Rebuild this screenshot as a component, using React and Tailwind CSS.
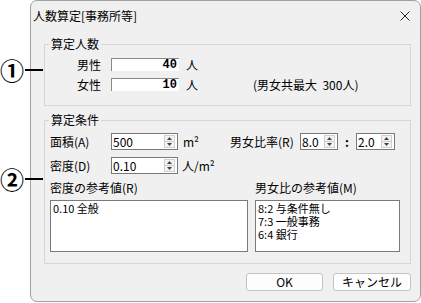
import React from 'react'

const FONT = { fontFamily: '"Noto Sans CJK JP", "Noto Sans", sans-serif' }

function Spin({ value, w }) {
  return (
    <div className={`${w} h-[17px] border border-[#7a7a7a] bg-white flex items-center`}>
      <span className="flex-1 pl-[1px] text-[12px] leading-[15px]">{value}</span>
      <div className="w-[11px] h-[13px] mr-[2px] flex flex-col border border-[#d0d0d0] bg-[#f3f3f3]">
        <div className="flex-1 flex items-center justify-center border-b border-[#d0d0d0]">
          <svg width="5" height="3" viewBox="0 0 5 3"><path d="M0 3 L2.5 0 L5 3 Z" fill="#404040" /></svg>
        </div>
        <div className="flex-1 flex items-center justify-center">
          <svg width="5" height="3" viewBox="0 0 5 3"><path d="M0 0 L2.5 3 L5 0 Z" fill="#404040" /></svg>
        </div>
      </div>
    </div>
  )
}

function CountRow({ label, value, note }) {
  return (
    <div className="flex items-center h-[13px]">
      <span className="ml-[32px] w-[34px] text-[12px] leading-[16px]">{label}</span>
      <div className="w-[68px] h-[13px] bg-white border-t border-l border-[#8a8a8a] flex items-center justify-end pr-[2px]">
        <span className="text-[12px] leading-[12px] font-bold" style={{ fontFamily: '"Liberation Mono", monospace' }}>{value}</span>
      </div>
      <span className="ml-[7px] text-[12px] leading-[16px]">人</span>
      {note && <span className="ml-[55px] text-[12px] leading-[16px] whitespace-pre">{note}</span>}
    </div>
  )
}

export default function App() {
  return (
    <div className="relative w-[421px] h-[303px] bg-white text-black pl-[30px]" style={FONT}>
      {/* markers */}
      <div className="absolute left-0 top-[58px] z-10 flex items-center">
        <span className="w-[24px] text-[24px] leading-[24px] text-center font-bold">①</span>
        <div className="ml-[1px] w-[18px] h-[2px] bg-black" />
      </div>
      <div className="absolute left-0 top-[167px] z-10 flex items-center">
        <span className="w-[24px] text-[24px] leading-[24px] text-center font-bold">②</span>
        <div className="ml-[1px] w-[18px] h-[2px] bg-black" />
      </div>

      <div className="w-[391px] h-[302px] border border-[#a0a0a0] rounded-[7px] bg-[#f0f0f0] flex flex-col">
        {/* title bar */}
        <div className="h-[29px] flex items-center justify-between pl-[2px] pr-[10px]">
          <span className="text-[12px] leading-[16px]">人数算定[事務所等]</span>
          <svg width="10" height="10" viewBox="0 0 10 10">
            <path d="M0.5 0.5 L9.5 9.5 M9.5 0.5 L0.5 9.5" stroke="#222" strokeWidth="1" />
          </svg>
        </div>

        <div className="flex flex-col pl-[13px] pr-[9px] pt-[14px]">
          {/* group 1 */}
          <div className="relative h-[62px] border border-[#d6d6d6] pt-[13px] flex flex-col gap-[7px]">
            <span className="absolute left-[4px] -top-[9px] px-[2px] bg-[#f0f0f0] text-[12px] leading-[16px]">算定人数</span>
            <CountRow label="男性" value="40" />
            <CountRow label="女性" value="10" note="(男女共最大  300人)" />
          </div>

          {/* group 2 */}
          <div className="relative mt-[14px] h-[144px] border border-[#d6d6d6] pt-[12px] pl-[5px] flex flex-col">
            <span className="absolute left-[4px] -top-[9px] px-[2px] bg-[#f0f0f0] text-[12px] leading-[16px]">算定条件</span>
            <div className="flex items-center h-[17px] text-[12px] leading-[16px]">
              <span className="w-[61px]">面積(A)</span>
              <Spin value="500" w="w-[67px]" />
              <span className="w-[52px] pl-[5px]">m²</span>
              <span className="w-[70px]">男女比率(R)</span>
              <Spin value="8.0" w="w-[38px]" />
              <span className="w-[18px] text-center font-bold">:</span>
              <Spin value="2.0" w="w-[39px]" />
            </div>
            <div className="flex items-center h-[17px] mt-[7px] text-[12px] leading-[16px]">
              <span className="w-[61px]">密度(D)</span>
              <Spin value="0.10" w="w-[67px]" />
              <span className="pl-[4px]">人/m²</span>
            </div>
            <div className="flex mt-[6px] text-[12px] leading-[16px]">
              <span className="w-[205px]">密度の参考値(R)</span>
              <span>男女比の参考値(M)</span>
            </div>
            <div className="flex mt-[4px] gap-[7px] text-[11px] leading-[13px]">
              <div className="w-[198px] h-[52px] border border-[#7a7a7a] bg-white pl-[2px] pt-[1px]">
                <div>0.10 全般</div>
              </div>
              <div className="w-[145px] h-[52px] border border-[#7a7a7a] bg-white pl-[2px] pt-[1px]">
                <div>8:2 与条件無し</div>
                <div>7:3 一般事務</div>
                <div>6:4 銀行</div>
              </div>
            </div>
          </div>

          {/* buttons */}
          <div className="flex justify-end gap-[10px] mt-[9px]">
            <button className="w-[77px] h-[18px] rounded-[3px] border border-[#c4c4c4] bg-[#fdfdfd] text-[12px] leading-[16px] flex items-center justify-center">OK</button>
            <button className="w-[78px] h-[18px] rounded-[3px] border border-[#c4c4c4] bg-[#fdfdfd] text-[12px] leading-[16px] flex items-center justify-center">キャンセル</button>
          </div>
        </div>
      </div>
    </div>
  )
}
